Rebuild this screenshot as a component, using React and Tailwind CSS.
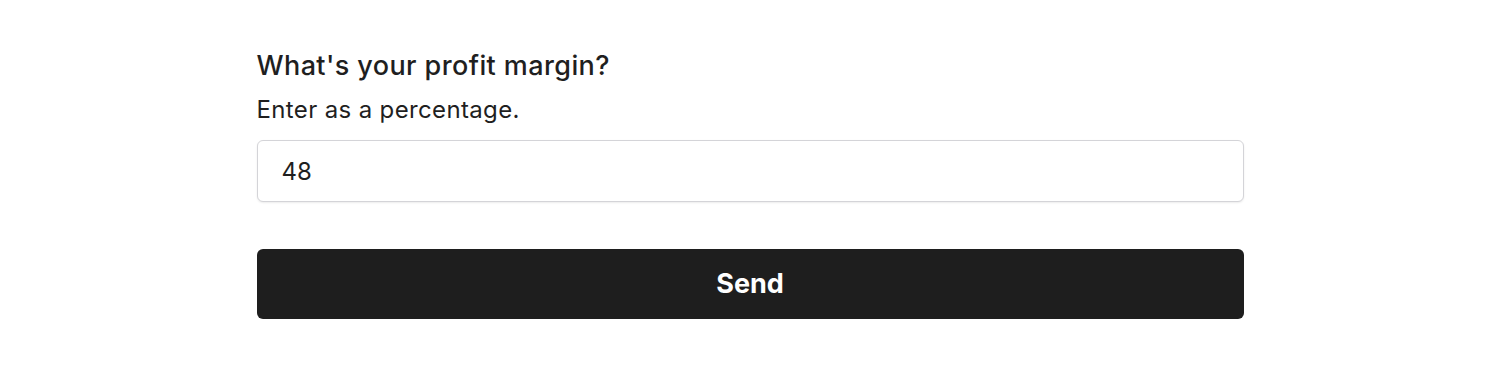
import React from 'react';

export default function App() {
  return (
    <div className="min-h-[374px] bg-white font-['Inter',sans-serif] text-[#1f1f1f]">
      <form className="mx-auto w-[987px] pt-[50px]" onSubmit={(e) => e.preventDefault()}>
        <label htmlFor="margin" className="block text-[27px] font-medium leading-[32px] tracking-[0.015em]">
          What's your profit margin?
        </label>
        <p className="mt-[13px] text-[24px] leading-[30px] tracking-[0.015em]">Enter as a percentage.</p>
        <input
          id="margin"
          type="text"
          defaultValue="48"
          className="mt-[15px] block h-[62px] w-full rounded-[6px] border border-[#d4d4d8] bg-white px-[24px] text-[24px] text-[#1f1f1f] shadow-[0_1px_2px_rgba(0,0,0,0.08)] outline-none"
        />
        <button
          type="submit"
          className="mt-[47px] block h-[70px] w-full rounded-[6px] bg-[#1e1e1e] text-[27px] font-bold text-white"
        >
          Send
        </button>
      </form>
    </div>
  );
}
